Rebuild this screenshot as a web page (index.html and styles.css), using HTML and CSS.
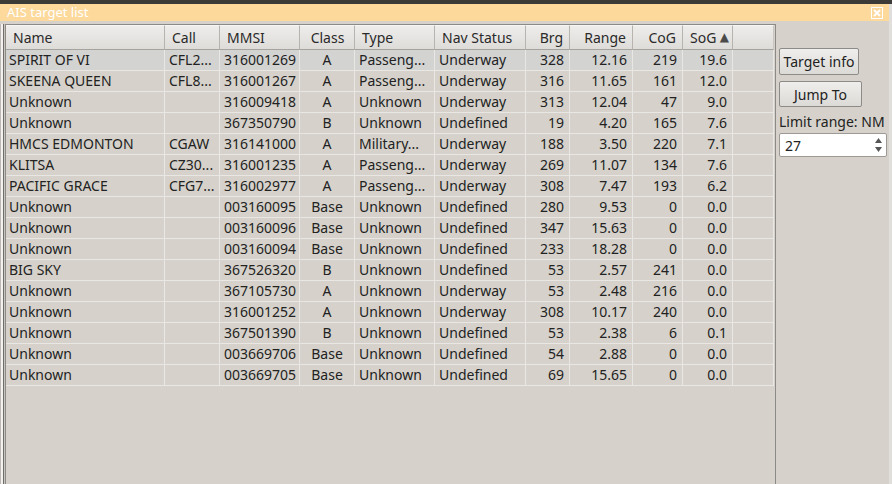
FILE: index.html
```html
<!DOCTYPE html>
<html lang="en">
<head>
    <meta charset="UTF-8">
    <title>AIS target list</title>
    <link rel="stylesheet" href="styles.css">
</head>
<body>
    <div class="topbar"></div>
    <div class="titlebar">
        <span class="title">AIS target list</span>
        <span class="close">
            <svg width="12" height="12" viewBox="0 0 12 12">
                <rect x="0.5" y="0.5" width="11" height="11" fill="none" stroke="#fff" stroke-width="1"/>
                <path d="M3 3 L9 9 M9 3 L3 9" stroke="#fff" stroke-width="2"/>
            </svg>
        </span>
    </div>
    <div class="main">
        <div class="edge"></div>
        <div class="list">
            <table class="grid">
                <colgroup>
                    <col style="width:159px"><col style="width:55px"><col style="width:80px">
                    <col style="width:55px"><col style="width:80px"><col style="width:91px">
                    <col style="width:44px"><col style="width:63px"><col style="width:50px">
                    <col style="width:50px"><col>
                </colgroup>
                <thead>
                    <tr>
                        <th>Name</th><th>Call</th><th>MMSI</th><th class="c">Class</th>
                        <th>Type</th><th>Nav Status</th><th class="r">Brg</th><th class="r">Range</th>
                        <th class="r">CoG</th><th class="sorted">SoG <span class="arrow">&#9650;</span></th><th></th>
                    </tr>
                </thead>
                <tbody>
                    <tr class="sel"><td>SPIRIT OF VI</td><td>CFL2...</td><td>316001269</td><td class="c">A</td><td>Passeng...</td><td>Underway</td><td class="r">328</td><td class="r">12.16</td><td class="r">219</td><td class="r">19.6</td><td></td></tr>
                    <tr><td>SKEENA QUEEN</td><td>CFL8...</td><td>316001267</td><td class="c">A</td><td>Passeng...</td><td>Underway</td><td class="r">316</td><td class="r">11.65</td><td class="r">161</td><td class="r">12.0</td><td></td></tr>
                    <tr><td>Unknown</td><td></td><td>316009418</td><td class="c">A</td><td>Unknown</td><td>Underway</td><td class="r">313</td><td class="r">12.04</td><td class="r">47</td><td class="r">9.0</td><td></td></tr>
                    <tr><td>Unknown</td><td></td><td>367350790</td><td class="c">B</td><td>Unknown</td><td>Undefined</td><td class="r">19</td><td class="r">4.20</td><td class="r">165</td><td class="r">7.6</td><td></td></tr>
                    <tr><td>HMCS EDMONTON</td><td>CGAW</td><td>316141000</td><td class="c">A</td><td>Military...</td><td>Underway</td><td class="r">188</td><td class="r">3.50</td><td class="r">220</td><td class="r">7.1</td><td></td></tr>
                    <tr><td>KLITSA</td><td>CZ30...</td><td>316001235</td><td class="c">A</td><td>Passeng...</td><td>Underway</td><td class="r">269</td><td class="r">11.07</td><td class="r">134</td><td class="r">7.6</td><td></td></tr>
                    <tr><td>PACIFIC GRACE</td><td>CFG7...</td><td>316002977</td><td class="c">A</td><td>Passeng...</td><td>Underway</td><td class="r">308</td><td class="r">7.47</td><td class="r">193</td><td class="r">6.2</td><td></td></tr>
                    <tr><td>Unknown</td><td></td><td>003160095</td><td class="c">Base</td><td>Unknown</td><td>Undefined</td><td class="r">280</td><td class="r">9.53</td><td class="r">0</td><td class="r">0.0</td><td></td></tr>
                    <tr><td>Unknown</td><td></td><td>003160096</td><td class="c">Base</td><td>Unknown</td><td>Undefined</td><td class="r">347</td><td class="r">15.63</td><td class="r">0</td><td class="r">0.0</td><td></td></tr>
                    <tr><td>Unknown</td><td></td><td>003160094</td><td class="c">Base</td><td>Unknown</td><td>Undefined</td><td class="r">233</td><td class="r">18.28</td><td class="r">0</td><td class="r">0.0</td><td></td></tr>
                    <tr><td>BIG SKY</td><td></td><td>367526320</td><td class="c">B</td><td>Unknown</td><td>Undefined</td><td class="r">53</td><td class="r">2.57</td><td class="r">241</td><td class="r">0.0</td><td></td></tr>
                    <tr><td>Unknown</td><td></td><td>367105730</td><td class="c">A</td><td>Unknown</td><td>Underway</td><td class="r">53</td><td class="r">2.48</td><td class="r">216</td><td class="r">0.0</td><td></td></tr>
                    <tr><td>Unknown</td><td></td><td>316001252</td><td class="c">A</td><td>Unknown</td><td>Underway</td><td class="r">308</td><td class="r">10.17</td><td class="r">240</td><td class="r">0.0</td><td></td></tr>
                    <tr><td>Unknown</td><td></td><td>367501390</td><td class="c">B</td><td>Unknown</td><td>Undefined</td><td class="r">53</td><td class="r">2.38</td><td class="r">6</td><td class="r">0.1</td><td></td></tr>
                    <tr><td>Unknown</td><td></td><td>003669706</td><td class="c">Base</td><td>Unknown</td><td>Undefined</td><td class="r">54</td><td class="r">2.88</td><td class="r">0</td><td class="r">0.0</td><td></td></tr>
                    <tr><td>Unknown</td><td></td><td>003669705</td><td class="c">Base</td><td>Unknown</td><td>Undefined</td><td class="r">69</td><td class="r">15.65</td><td class="r">0</td><td class="r">0.0</td><td></td></tr>
                </tbody>
            </table>
        </div>
        <div class="side">
            <button class="btn info">Target info</button>
            <button class="btn jump">Jump To</button>
            <div class="label">Limit range: NM</div>
            <div class="spin">
                <span class="val">27</span>
                <span class="arrows">
                    <svg width="9" height="18" viewBox="0 0 9 18">
                        <path d="M1 7 L4.5 2 L8 7 Z" fill="#555"/>
                        <path d="M1 11 L4.5 16 L8 11 Z" fill="#555"/>
                    </svg>
                </span>
            </div>
        </div>
    </div>
</body>
</html>
```

FILE: styles.css
```css
html, body {
    margin: 0;
    padding: 0;
    height: 100%;
    overflow: hidden;
}

body {
    background-color: #d6d2cb;
    font-family: "Noto Sans", "DejaVu Sans", sans-serif;
    font-size: 14px;
    color: #222;
    display: flex;
    flex-direction: column;
}

.topbar {
    height: 4px;
    background-color: #3c3b37;
}

.titlebar {
    height: 17px;
    background-color: #fdd99b;
    display: flex;
    align-items: center;
    justify-content: space-between;
    padding: 0 6px 0 7px;
    border-right: 3px solid #dfdedc;
}

.title {
    color: #fff;
    font-size: 13px;
    line-height: 17px;
}

.close {
    display: flex;
}

.main {
    flex: 1;
    display: flex;
    padding-top: 3px;
    border-right: 3px solid #e0dfdc;
    min-height: 0;
}

.edge {
    width: 5px;
    background: linear-gradient(to right, #bdbab5 0 1px, #f2f1ef 1px 3px, #6f6d69 3px 4px, #c9c5be 4px);
}

.list {
    width: 769px;
    border: 1px solid #8c8a86;
    border-bottom: none;
    overflow: hidden;
}

.grid {
    border-collapse: separate;
    border-spacing: 0;
    table-layout: fixed;
    width: 768px;
    white-space: nowrap;
}

.grid th {
    height: 23px;
    padding: 0 6px 0 7px;
    font-weight: normal;
    text-align: left;
    color: #2a2a2a;
    background: linear-gradient(#eeedeb, #dedcd9);
    border-right: 1px solid #b7b4af;
    border-bottom: 1px solid #a6a39e;
    border-top: 1px solid #f7f7f6;
    overflow: hidden;
}

.grid th:last-child {
    border-right: 1px solid #c9c6c1;
}

.grid td {
    height: 20px;
    line-height: 20px;
    padding: 0 4px 0 3px;
    border-right: 1px solid #e9e7e3;
    border-bottom: 1px solid #e9e7e3;
    overflow: hidden;
}

.grid td:nth-child(n+2) {
    padding-left: 4px;
}

.grid td.r {
    padding-right: 5px;
}

.grid .c {
    text-align: center;
}

.grid .r {
    text-align: right;
}

.sorted {
    position: relative;
}

.arrow {
    position: absolute;
    right: 3px;
    top: 2px;
    font-size: 12px;
    color: #4a4a4a;
}

.sel td {
    background-color: #d3d3d2;
}

.side {
    display: flex;
    flex-direction: column;
    align-items: flex-start;
    padding: 24px 0 0 3px;
}

.btn {
    font-family: "Noto Sans", "DejaVu Sans", sans-serif;
    font-size: 14px;
    color: #222;
    background: linear-gradient(#efeeec, #dcdad6);
    border: 1px solid #8d8b87;
    border-radius: 2px;
    padding: 0;
}

.info {
    width: 80px;
    height: 27px;
}

.jump {
    width: 83px;
    height: 26px;
    margin-top: 6px;
}

.label {
    margin-top: 6px;
    line-height: 18px;
}

.spin {
    margin-top: 2px;
    width: 106px;
    height: 22px;
    background-color: #fff;
    border: 1px solid #9d9a95;
    border-radius: 2px;
    display: flex;
    align-items: center;
    justify-content: space-between;
}

.val {
    padding-left: 5px;
}

.arrows {
    display: flex;
    padding-right: 3px;
}
```
